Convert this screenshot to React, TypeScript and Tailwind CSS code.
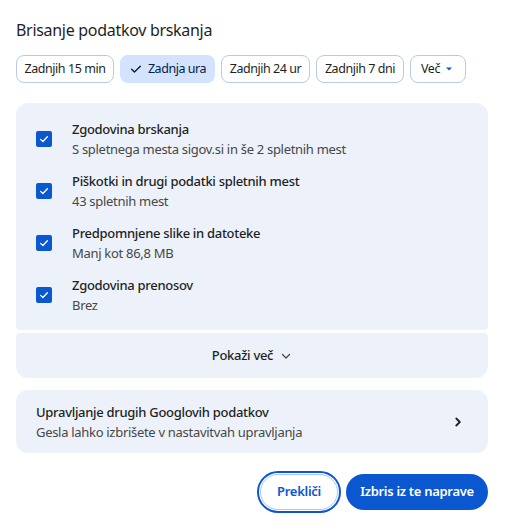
import React from 'react';

const chips = [
  { label: 'Zadnjih 15 min', w: 'w-[98px]' },
  { label: 'Zadnja ura', w: 'w-[95px]' },
  { label: 'Zadnjih 24 ur', w: 'w-[89px]' },
  { label: 'Zadnjih 7 dni', w: 'w-[88px]' },
];

const items = [
  { title: 'Zgodovina brskanja', sub: 'S spletnega mesta sigov.si in še 2 spletnih mest' },
  { title: 'Piškotki in drugi podatki spletnih mest', sub: '43 spletnih mest' },
  { title: 'Predpomnjene slike in datoteke', sub: 'Manj kot 86,8 MB' },
  { title: 'Zgodovina prenosov', sub: 'Brez' },
];

function CheckIcon({ className }: { className?: string }) {
  return (
    <svg viewBox="0 0 16 16" className={className} fill="none" stroke="currentColor" strokeWidth="1.6" strokeLinecap="round" strokeLinejoin="round">
      <path d="M3 8.3l3.2 3.1L13 4.8" />
    </svg>
  );
}

function Checkbox() {
  return (
    <div className="w-4 h-4 rounded-[2px] bg-[#0b57d0] flex items-center justify-center shrink-0">
      <svg viewBox="0 0 16 16" className="w-3 h-3 text-white" fill="none" stroke="currentColor" strokeWidth="1.8" strokeLinecap="round" strokeLinejoin="round">
        <path d="M3.5 8.5l3 2.8 6-6.3" />
      </svg>
    </div>
  );
}

function App() {
  return (
    <div className="w-[505px] h-[528px] bg-white pl-4 pr-[17px] pt-[18px] text-[#1f1f1f] tracking-[-0.3px]" style={{ fontFamily: '"Noto Sans", "Open Sans", sans-serif' }}>
      <h1 className="text-[16px] leading-6 font-normal">Brisanje podatkov brskanja</h1>

      <div className="flex gap-[6px] mt-[13px] whitespace-nowrap text-[12.5px] tracking-[-0.45px]">
        {chips.map((c) =>
          c.label === 'Zadnja ura' ? (
            <div key={c.label} className={`${c.w} h-7 rounded-lg bg-[#d3e3fd] text-[#041e49] flex items-center justify-center gap-[5px]`}>
              <CheckIcon className="w-[14px] h-[14px]" />
              {c.label}
            </div>
          ) : (
            <div key={c.label} className={`${c.w} h-7 rounded-lg border border-[#b8cbe6] flex items-center justify-center`}>
              {c.label}
            </div>
          )
        )}
        <div className="w-[56px] h-7 pl-[10px] pr-[11px] rounded-lg border border-[#b8cbe6] flex items-center justify-between">
          Več
          <svg viewBox="0 0 10 10" className="w-[10px] h-[10px] text-[#0b57d0]" fill="currentColor">
            <path d="M2 3.5h6L5 6.5z" />
          </svg>
        </div>
      </div>

      <div className="mt-5 rounded-t-xl rounded-b-[4px] bg-[#edf2fa] pt-[10px] pb-[9px]">
        {items.map((it) => (
          <div key={it.title} className="h-[52px] flex items-center pl-5">
            <Checkbox />
            <div className="ml-5 text-[13px] leading-5">
              <div className="font-medium text-[#1f1f1f]">{it.title}</div>
              <div className="text-[#474747]">{it.sub}</div>
            </div>
          </div>
        ))}
      </div>

      <div className="mt-[3px] h-[45px] rounded-t-[4px] rounded-b-xl bg-[#edf2fa] flex items-center justify-center gap-[7px] text-[13px] font-medium">
        Pokaži več
        <svg viewBox="0 0 12 12" className="w-3 h-3 text-[#474747]" fill="none" stroke="currentColor" strokeWidth="1.2" strokeLinecap="round" strokeLinejoin="round">
          <path d="M2.5 4.5L6 8l3.5-3.5" />
        </svg>
      </div>

      <div className="mt-3 h-[63px] rounded-xl bg-[#edf2fa] flex items-center justify-between pl-5 pr-6">
        <div className="text-[13px] leading-5">
          <div className="font-medium">Upravljanje drugih Googlovih podatkov</div>
          <div className="text-[#474747]">Gesla lahko izbrišete v nastavitvah upravljanja</div>
        </div>
        <svg viewBox="0 0 12 12" className="w-3 h-3 text-[#1f1f1f]" fill="none" stroke="currentColor" strokeWidth="1.8" strokeLinecap="round" strokeLinejoin="round">
          <path d="M4.3 2.5L7.8 6l-3.5 3.5" />
        </svg>
      </div>

      <div className="mt-[21px] flex justify-end gap-2">
        <button className="h-9 w-[78px] rounded-full border border-[#a8c7fa] text-[#0b57d0] text-[13px] font-semibold outline-2 outline-offset-1 outline-[#0b57d0]">
          Prekliči
        </button>
        <button className="h-9 w-[142px] rounded-full bg-[#0b57d0] text-white text-[13px] font-semibold">
          Izbris iz te naprave
        </button>
      </div>
    </div>
  );
}

export default App;
